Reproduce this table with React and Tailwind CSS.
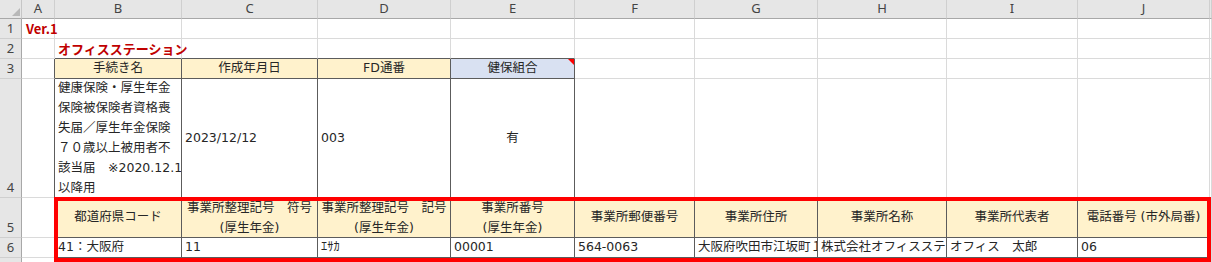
import React from "react";

const COLS = ["A", "B", "C", "D", "E", "F", "G", "H", "I", "J", "K"];
const ROWS = [1, 2, 3, 4, 5, 6, 7];

const inTable = (c, r) => {
  const ci = COLS.indexOf(c);
  if (r >= 3 && r <= 4 && ci >= 1 && ci <= 4) return true;
  if (r >= 5 && r <= 6 && ci >= 1 && ci <= 9) return true;
  return false;
};

const darkRight = (c, r) => inTable(c, r) || (c === "A" && r >= 3 && r <= 6) || (c === "E" && r >= 3 && r <= 4);
const darkBottom = (c, r) => {
  const ci = COLS.indexOf(c);
  if (inTable(c, r)) return true;
  if (r === 2 && ci >= 1 && ci <= 4) return true;
  if (r === 4 && ci >= 5 && ci <= 9) return true;
  return false;
};

const fillFor = (c, r) => {
  if (r === 3 && (c === "B" || c === "C" || c === "D")) return "bg-[#fff2cc]";
  if (r === 3 && c === "E") return "bg-[#d9e1f2]";
  if (r === 5 && COLS.indexOf(c) >= 1 && COLS.indexOf(c) <= 9) return "bg-[#fff2cc]";
  return "bg-white";
};

const L = ({ children }) => (
  <div className="w-full overflow-hidden whitespace-nowrap pl-[3px] text-left">{children}</div>
);
const C = ({ children }) => <div className="w-full whitespace-nowrap text-center">{children}</div>;

const content = {
  A1: (
    <div className="whitespace-nowrap pl-[4px] font-['Noto_Sans_CJK_JP',sans-serif] text-[13px] font-bold text-[#c00000]">
      Ver.1
    </div>
  ),
  B2: (
    <div className="whitespace-nowrap pl-[3px] font-['Noto_Sans_CJK_JP',sans-serif] text-[13px] font-bold text-[#c00000]">
      オフィスステーション
    </div>
  ),
  B3: <C>手続き名</C>,
  C3: <C>作成年月日</C>,
  D3: <C>FD通番</C>,
  E3: (
    <>
      <C>健保組合</C>
      <div className="absolute right-0 top-0 h-0 w-0 border-l-[6px] border-t-[6px] border-l-transparent border-t-[#ff0000]" />
    </>
  ),
  B4: (
    <div className="flex h-full w-full flex-col justify-center pl-[3px] leading-[20px]">
      <div className="whitespace-nowrap">健康保険・厚生年金</div>
      <div className="whitespace-nowrap">保険被保険者資格喪</div>
      <div className="whitespace-nowrap">失届／厚生年金保険</div>
      <div className="whitespace-nowrap">７０歳以上被用者不</div>
      <div className="whitespace-nowrap">該当届　※2020.12.1</div>
      <div className="whitespace-nowrap">以降用</div>
    </div>
  ),
  C4: <L>2023/12/12</L>,
  D4: <L>003</L>,
  E4: <C>有</C>,
  B5: <C>都道府県コード</C>,
  C5: (
    <div className="w-full text-center leading-[20px]">
      <div className="whitespace-nowrap">事業所整理記号　符号</div>
      <div className="whitespace-nowrap">(厚生年金)</div>
    </div>
  ),
  D5: (
    <div className="w-full text-center leading-[20px]">
      <div className="whitespace-nowrap">事業所整理記号　記号</div>
      <div className="whitespace-nowrap">(厚生年金)</div>
    </div>
  ),
  E5: (
    <div className="w-full text-center leading-[20px]">
      <div className="whitespace-nowrap">事業所番号</div>
      <div className="whitespace-nowrap">(厚生年金)</div>
    </div>
  ),
  F5: <C>事業所郵便番号</C>,
  G5: <C>事業所住所</C>,
  H5: <C>事業所名称</C>,
  I5: <C>事業所代表者</C>,
  J5: <C>電話番号 (市外局番)</C>,
  B6: <L>41：大阪府</L>,
  C6: <L>11</L>,
  D6: <L>ｴｻｶ</L>,
  E6: <L>00001</L>,
  F6: <L>564-0063</L>,
  G6: <L>大阪府吹田市江坂町１丁目</L>,
  H6: <L>株式会社オフィスステーション</L>,
  I6: <L>オフィス　太郎</L>,
  J6: <L>06</L>,
};

function Cell({ c, r }) {
  const key = c + r;
  const rc = darkRight(c, r) ? "border-r-[#5c5c5c]" : "border-r-[#dadada]";
  const bc = darkBottom(c, r) ? "border-b-[#5c5c5c]" : "border-b-[#dadada]";
  const visible = key === "A1" || key === "B2";
  return (
    <div
      className={`relative flex items-center border-r border-b ${rc} ${bc} ${fillFor(c, r)} ${
        visible ? "overflow-visible z-10" : "overflow-hidden"
      }`}
    >
      {content[key] || null}
    </div>
  );
}

export default function App() {
  return (
    <div className="relative h-[262px] w-[1212px] overflow-hidden bg-white font-['DejaVu_Sans','Noto_Sans_CJK_JP',sans-serif] text-[12.5px] text-[#262626]">
      <div className="grid grid-cols-[22px_33px_127px_136px_133px_124px_120px_123px_129px_131px_132px_2px] grid-rows-[19px_20px_20px_20px_119px_40px_20px_20px]">
        <div className="relative border-r border-b border-r-[#c6c6c6] border-b-[#a8a8a8] bg-[#e6e6e6]">
          <div className="absolute bottom-[2px] right-[1px] h-0 w-0 border-b-[8px] border-l-[8px] border-b-[#b8b8b8] border-l-transparent" />
        </div>
        {COLS.map((c) => (
          <div
            key={c}
            className="flex items-center justify-center border-r border-b border-r-[#cfcfcf] border-b-[#a8a8a8] bg-[#e6e6e6] font-['Noto_Sans',sans-serif] text-[13px] text-[#444]"
          >
            {c === "K" ? "" : c}
          </div>
        ))}
        {ROWS.map((r) => (
          <React.Fragment key={r}>
            <div className="flex items-end justify-center border-r border-b border-r-[#a8a8a8] border-b-[#cfcfcf] bg-[#e6e6e6] pb-[1px] font-['Noto_Sans',sans-serif] text-[13px] leading-[17px] text-[#444]">
              {r === 7 ? "" : r}
            </div>
            {COLS.map((c) => (
              <Cell key={c + r} c={c} r={r} />
            ))}
          </React.Fragment>
        ))}
      </div>
      <div className="pointer-events-none absolute left-[54px] top-[197px] z-20 h-[65px] w-[1157px] border-[4px] border-[#ff0000]" />
    </div>
  );
}
